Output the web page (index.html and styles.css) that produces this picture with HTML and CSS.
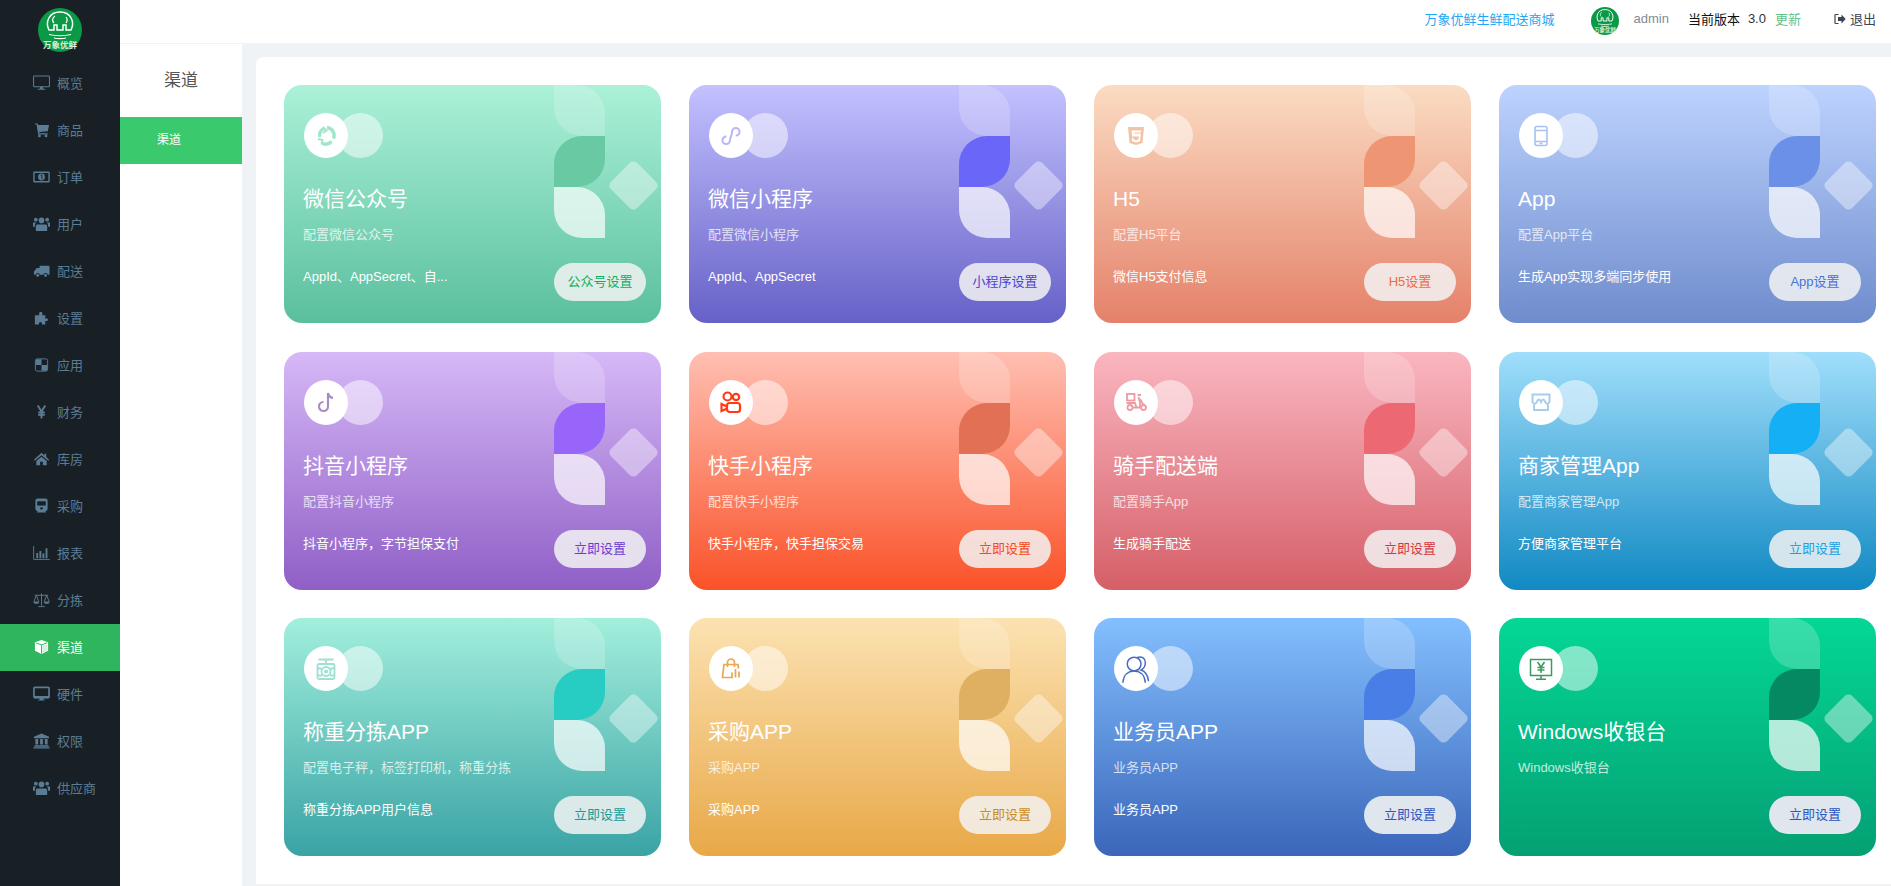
FILE: index.html
```html
<!DOCTYPE html>
<html lang="en">
<head>
    <meta charset="UTF-8">
    <meta name="viewport" content="width=device-width, initial-scale=1.0">
    <title>渠道</title>
    <link rel="stylesheet" href="styles.css">
</head>
<body>
    <svg class="defs" width="0" height="0">
        <symbol id="logo" viewBox="0 0 44 44">
            <circle cx="22" cy="22" r="22" fill="#0a9a45"/>
            <path d="M11 22c-4-8 0-18 11-18s15 10 11 18h-5v-5h-3v5h-6v-5h-3v5z" fill="none" stroke="#fff" stroke-width="1.500"/>
            <path d="M17 8c-3 2-3 5-1 7M28 9c1.500 2 1.500 4 0 6" fill="none" stroke="#fff" stroke-width="1.200"/>
            <path d="M11 26.500c6 1.500 16 1.500 22 0M16 30c4 .8 8 .8 12 0" fill="none" stroke="#fff" stroke-width="1.200"/>
            <text x="22" y="40" text-anchor="middle" class="logo-text">万象优鲜</text>
        </symbol>
        <symbol id="users" viewBox="0 0 18 16">
            <circle cx="9" cy="4.200" r="3"/><circle cx="3" cy="3.400" r="2"/><circle cx="15" cy="3.400" r="2"/>
            <path d="M4.500 8.400h9c1 0 1.500 1 1.500 2v5H3v-5c0-1 .5-2 1.500-2zM0 6.500h3.500c-.8.8-1.500 1.600-1.500 3v1.500H0zM18 6.500h-3.500c.8.8 1.500 1.600 1.500 3v1.500h2z"/>
        </symbol>
    </svg>

    <aside class="sidebar">
        <div class="sidebar-logo"><svg class="logo-big"><use href="#logo"/></svg></div>
        <nav class="menu">
            <a class="menu-item">
                <svg class="menu-icon" viewBox="0 0 18 16"><rect x=".6" y=".6" width="16.800" height="11.300" rx=".8" fill="none" stroke="currentColor" stroke-width="1.100"/><path d="M7.500 12v2.200h-2.500v1h8v-1h-2.500V12z"/></svg>
                <span>概览</span>
            </a>
            <a class="menu-item">
                <svg class="menu-icon" viewBox="0 0 18 16"><path d="M2 1h3l.4 1.800H17l-1.300 6.400-9.200.9.300 1.300H15.500v1.300H5.500L3.800 2.300H2z"/><circle cx="6.800" cy="14.300" r="1.500"/><circle cx="13.800" cy="14.300" r="1.500"/></svg>
                <span>商品</span>
            </a>
            <a class="menu-item">
                <svg class="menu-icon" viewBox="0 0 18 16"><rect x="1" y="3" width="16" height="10" rx=".5" fill="none" stroke="currentColor" stroke-width="1.500"/><circle cx="9" cy="8" r="3.600"/><path d="M8.200 6.400l1.300-.6v4.600" fill="none" stroke="#182025" stroke-width="1"/></svg>
                <span>订单</span>
            </a>
            <a class="menu-item">
                <svg class="menu-icon"><use href="#users"/></svg>
                <span>用户</span>
            </a>
            <a class="menu-item">
                <svg class="menu-icon" viewBox="0 0 18 16"><path d="M7 2.500h9.500a1 1 0 0 1 1 1V12h-1.800a2.400 2.400 0 0 0-4.700 0H7.300a2.400 2.400 0 0 0-4.700 0H1V8.500l3-3.600h3z"/><circle cx="5" cy="12.700" r="1.500"/><circle cx="13.300" cy="12.700" r="1.500"/></svg>
                <span>配送</span>
            </a>
            <a class="menu-item">
                <svg class="menu-icon" viewBox="0 0 18 16"><path d="M2 5h4.500V3a1.700 1.700 0 1 1 3.400 0v2H13v3.500h1.500a1.300 1.300 0 1 1 0 2.700H13V15H9.500v-1.200a1.600 1.600 0 1 0-3.200 0V15H2z"/></svg>
                <span>设置</span>
            </a>
            <a class="menu-item">
                <svg class="menu-icon" viewBox="0 0 18 16"><rect x="2.500" y="1.500" width="13" height="13" rx="2" fill="none" stroke="currentColor" stroke-width="1"/><path d="M3 2h6v6H3zM9 8h6v6H9z"/></svg>
                <span>应用</span>
            </a>
            <a class="menu-item">
                <svg class="menu-icon" viewBox="0 0 18 16"><path d="M5 1l4 6.500L13 1M9 7.500V15M5.500 8.500h7M5.500 11h7" fill="none" stroke="currentColor" stroke-width="2"/></svg>
                <span>财务</span>
            </a>
            <a class="menu-item">
                <svg class="menu-icon" viewBox="0 0 18 16"><path d="M9 1.500l3 2.700V2.500h2v3.500l3 2.800-.9 1L9 4 1.900 9.800l-.9-1zM3.500 10L9 5.500l5.500 4.500v4.500h-4v-3.500h-3v3.500h-4z"/></svg>
                <span>库房</span>
            </a>
            <a class="menu-item">
                <svg class="menu-icon" viewBox="0 0 18 16"><path d="M5 0h8a2.500 2.500 0 0 1 2.500 2.500V11A2.500 2.500 0 0 1 13 13.500l1 1.500H4l1-1.500A2.500 2.500 0 0 1 2.500 11V2.500A2.500 2.500 0 0 1 5 0z"/><rect x="4.500" y="3" width="9" height="4.500" fill="#182025"/><circle cx="9" cy="10.500" r="1.300" fill="#182025"/></svg>
                <span>采购</span>
            </a>
            <a class="menu-item">
                <svg class="menu-icon" viewBox="0 0 18 16"><path d="M.7.500v14.300h17" fill="none" stroke="currentColor" stroke-width="1"/><path d="M3.500 8h2v5.500h-2zM6.800 6h2v7.500h-2zM10 8.500h2v5h-2zM13.300 3h2v10.500h-2z"/></svg>
                <span>报表</span>
            </a>
            <a class="menu-item">
                <svg class="menu-icon" viewBox="0 0 18 16"><path d="M9 1v13M5.500 15h7M2 3h14M3.500 3L1 9.500M3.500 3L6 9.500M14.500 3L12 9.500M14.500 3L17 9.500" fill="none" stroke="currentColor" stroke-width="1"/><path d="M.4 9.500h6.200a3.100 2.600 0 0 1-6.200 0zM11.400 9.500h6.200a3.100 2.600 0 0 1-6.200 0z"/></svg>
                <span>分拣</span>
            </a>
            <a class="menu-item active">
                <svg class="menu-icon" viewBox="0 0 18 16"><path d="M9 .5l7 2.500v9l-7 3.500L2 12V3z"/><path d="M3 3.500l6 2.300 6-2.300M9 5.800v9" fill="none" stroke="#2eb55e" stroke-width="1"/><path d="M9.800 6.700l5.400-2v6.900l-5.400 2.700z" fill="#d6efe0"/></svg>
                <span>渠道</span>
            </a>
            <a class="menu-item">
                <svg class="menu-icon" viewBox="0 0 18 16"><rect x="1" y="1" width="16" height="10.800" rx="1" fill="none" stroke="currentColor" stroke-width="1.800"/><path d="M1 10h16v2.500H1zM7 12.500h4v1.500h1.500v1h-7v-1H7z"/></svg>
                <span>硬件</span>
            </a>
            <a class="menu-item">
                <svg class="menu-icon" viewBox="0 0 18 16"><path d="M9 0l8 3.500V5H1V3.500zM2.500 5.800h3v6h-3zM7.500 5.800h3v6h-3zM12.500 5.800h3v6h-3zM1.500 12.500h15V14h-15zM.5 14.500h17V16H.5z"/></svg>
                <span>权限</span>
            </a>
            <a class="menu-item">
                <svg class="menu-icon"><use href="#users"/></svg>
                <span>供应商</span>
            </a>
        </nav>
    </aside>

    <div class="main">
        <header class="topbar">
            <a class="shop-link">万象优鲜生鲜配送商城</a>
            <svg class="avatar"><use href="#logo"/></svg>
            <span class="user-name">admin</span>
            <span class="version">当前版本</span>
            <span class="version-num">3.0</span>
            <a class="update">更新</a>
            <a class="logout">
                <svg class="logout-icon" viewBox="0 0 12 12"><path d="M4.500 1.500H1.700a.7.700 0 0 0-.7.700v7.600a.7.700 0 0 0 .7.700h2.800" fill="none" stroke="currentColor" stroke-width="1.200"/><path d="M4 4h3.500V1.500L11.700 6 7.500 10.500V8H4z"/></svg>
                <span>退出</span>
            </a>
        </header>

        <div class="body-wrap">
            <div class="subnav">
                <div class="subnav-title">渠道</div>
                <div class="subnav-item">渠道</div>
            </div>
            <div class="panel">
                <div class="card-grid">

                    <div class="card c-wechat">
                        <div class="card-deco"><i class="leaf leaf-a"></i><i class="leaf leaf-b"></i><i class="leaf leaf-a"></i><i class="diamond"></i></div>
                        <div class="card-logo">
                            <span class="logo-circle"><svg viewBox="0 0 24 24" fill="none" stroke="#9fe6cb" stroke-width="3.400"><path d="M6 13a6.500 6.500 0 0 1 4-8.500"/><path d="M13 3.500a8 8 0 0 1 6.500 11"/><path d="M17.500 17.500a8 8 0 0 1-9 2"/><path d="M4 15l4.500 1-1 4.500" stroke-width="2"/><path d="M9 3l3.500 3.500L9 9" stroke-width="2"/></svg></span>
                            <span class="logo-ghost"></span>
                        </div>
                        <h3 class="card-title">微信公众号</h3>
                        <p class="card-sub">配置微信公众号</p>
                        <div class="card-foot">
                            <p class="card-desc">AppId、AppSecret、自...</p>
                            <a class="card-btn">公众号设置</a>
                        </div>
                    </div>

                    <div class="card c-mini">
                        <div class="card-deco"><i class="leaf leaf-a"></i><i class="leaf leaf-b"></i><i class="leaf leaf-a"></i><i class="diamond"></i></div>
                        <div class="card-logo">
                            <span class="logo-circle"><svg viewBox="0 0 24 24" fill="none" stroke="#b9b6f5" stroke-width="2"><path d="M7.500 12.500A3.800 3.800 0 1 0 11 16.300C11 13 13 11.500 13 7.800a3.800 3.800 0 1 1 3.800 3.800"/></svg></span>
                            <span class="logo-ghost"></span>
                        </div>
                        <h3 class="card-title">微信小程序</h3>
                        <p class="card-sub">配置微信小程序</p>
                        <div class="card-foot">
                            <p class="card-desc">AppId、AppSecret</p>
                            <a class="card-btn">小程序设置</a>
                        </div>
                    </div>

                    <div class="card c-h5">
                        <div class="card-deco"><i class="leaf leaf-a"></i><i class="leaf leaf-b"></i><i class="leaf leaf-a"></i><i class="diamond"></i></div>
                        <div class="card-logo">
                            <span class="logo-circle"><svg viewBox="0 0 24 24"><path fill="#f3c3a6" fill-rule="evenodd" d="M4 3h16l-1.500 16L12 21l-6.500-2zM7.500 6.500l.6 6h6.700l-.3 3-2.500.8-2.500-.8-.1-1.500H7.800l.3 3.200L12 18.500l4-1.300.8-7.800H10.300l-.2-1H17l.2-1.900z"/></svg></span>
                            <span class="logo-ghost"></span>
                        </div>
                        <h3 class="card-title">H5</h3>
                        <p class="card-sub">配置H5平台</p>
                        <div class="card-foot">
                            <p class="card-desc">微信H5支付信息</p>
                            <a class="card-btn">H5设置</a>
                        </div>
                    </div>

                    <div class="card c-app">
                        <div class="card-deco"><i class="leaf leaf-a"></i><i class="leaf leaf-b"></i><i class="leaf leaf-a"></i><i class="diamond"></i></div>
                        <div class="card-logo">
                            <span class="logo-circle"><svg viewBox="0 0 24 24" fill="none" stroke="#a8c1ef" stroke-width="1.600"><rect x="6" y="2.500" width="12" height="19" rx="2"/><path d="M6 6.500h12M6 17.500h12M10.500 19.500h3"/></svg></span>
                            <span class="logo-ghost"></span>
                        </div>
                        <h3 class="card-title">App</h3>
                        <p class="card-sub">配置App平台</p>
                        <div class="card-foot">
                            <p class="card-desc">生成App实现多端同步使用</p>
                            <a class="card-btn">App设置</a>
                        </div>
                    </div>

                    <div class="card c-douyin">
                        <div class="card-deco"><i class="leaf leaf-a"></i><i class="leaf leaf-b"></i><i class="leaf leaf-a"></i><i class="diamond"></i></div>
                        <div class="card-logo">
                            <span class="logo-circle"><svg viewBox="0 0 24 24" fill="none" stroke="#a98bc6" stroke-width="2.200"><path d="M14 3v13.500a4.500 4.500 0 1 1-4.500-4.500"/><path d="M14 3c.5 3 2.500 4.500 5 5"/></svg></span>
                            <span class="logo-ghost"></span>
                        </div>
                        <h3 class="card-title">抖音小程序</h3>
                        <p class="card-sub">配置抖音小程序</p>
                        <div class="card-foot">
                            <p class="card-desc">抖音小程序，字节担保支付</p>
                            <a class="card-btn">立即设置</a>
                        </div>
                    </div>

                    <div class="card c-kuaishou">
                        <div class="card-deco"><i class="leaf leaf-a"></i><i class="leaf leaf-b"></i><i class="leaf leaf-a"></i><i class="diamond"></i></div>
                        <div class="card-logo">
                            <span class="logo-circle"><svg viewBox="0 0 24 24" fill="none" stroke="#ff3b17" stroke-width="2.200"><circle cx="8.500" cy="6.500" r="4"/><circle cx="17" cy="7" r="3.200"/><rect x="8" y="13" width="13" height="9" rx="2.500"/><path d="M8 16.500L2.500 14v7L8 18.500"/></svg></span>
                            <span class="logo-ghost"></span>
                        </div>
                        <h3 class="card-title">快手小程序</h3>
                        <p class="card-sub">配置快手小程序</p>
                        <div class="card-foot">
                            <p class="card-desc">快手小程序，快手担保交易</p>
                            <a class="card-btn">立即设置</a>
                        </div>
                    </div>

                    <div class="card c-rider">
                        <div class="card-deco"><i class="leaf leaf-a"></i><i class="leaf leaf-b"></i><i class="leaf leaf-a"></i><i class="diamond"></i></div>
                        <div class="card-logo">
                            <span class="logo-circle"><svg viewBox="0 0 24 24" fill="none" stroke="#f09aa3" stroke-width="1.800"><rect x="3" y="4" width="7.500" height="6.500"/><path d="M2.500 13h8.500l1.500 4.500h3.500c.5-3 0-6-1.500-10.500"/><path d="M13.500 5H17"/><circle cx="6" cy="17.500" r="2.500"/><circle cx="19.500" cy="17.500" r="2.500"/><path d="M8.500 17.500h4M16 9l3.500 6"/></svg></span>
                            <span class="logo-ghost"></span>
                        </div>
                        <h3 class="card-title">骑手配送端</h3>
                        <p class="card-sub">配置骑手App</p>
                        <div class="card-foot">
                            <p class="card-desc">生成骑手配送</p>
                            <a class="card-btn">立即设置</a>
                        </div>
                    </div>

                    <div class="card c-store">
                        <div class="card-deco"><i class="leaf leaf-a"></i><i class="leaf leaf-b"></i><i class="leaf leaf-a"></i><i class="diamond"></i></div>
                        <div class="card-logo">
                            <span class="logo-circle"><svg viewBox="0 0 24 24" fill="none" stroke="#a9cdec" stroke-width="2"><path d="M3.500 4.500h17V12c-1.400 2.500-2.800 2.500-4.200 0-1.400-3.500-2.800-3.500-4.300 0-1.400-3.500-2.800-3.500-4.300 0-1.400 2.500-2.800 2.500-4.200 0z"/><path d="M5 14.500v5.500h14v-5.500"/></svg></span>
                            <span class="logo-ghost"></span>
                        </div>
                        <h3 class="card-title">商家管理App</h3>
                        <p class="card-sub">配置商家管理App</p>
                        <div class="card-foot">
                            <p class="card-desc">方便商家管理平台</p>
                            <a class="card-btn">立即设置</a>
                        </div>
                    </div>

                    <div class="card c-weigh">
                        <div class="card-deco"><i class="leaf leaf-a"></i><i class="leaf leaf-b"></i><i class="leaf leaf-a"></i><i class="diamond"></i></div>
                        <div class="card-logo">
                            <span class="logo-circle"><svg viewBox="0 0 24 24" fill="none" stroke="#9fe0d0" stroke-width="1.800"><path d="M4.500 2.500h15M12 2.500V7"/><rect x="3.500" y="7" width="17" height="15" rx="1.500"/><circle cx="12" cy="14.500" r="4.500"/><circle cx="12" cy="14.500" r="1.200"/><path d="M3.500 11l4.500 1M20.500 11l-4.500 1M3.500 18.500H8M20.500 18.500H16"/></svg></span>
                            <span class="logo-ghost"></span>
                        </div>
                        <h3 class="card-title">称重分拣APP</h3>
                        <p class="card-sub">配置电子秤，标签打印机，称重分拣</p>
                        <div class="card-foot">
                            <p class="card-desc">称重分拣APP用户信息</p>
                            <a class="card-btn">立即设置</a>
                        </div>
                    </div>

                    <div class="card c-buy">
                        <div class="card-deco"><i class="leaf leaf-a"></i><i class="leaf leaf-b"></i><i class="leaf leaf-a"></i><i class="diamond"></i></div>
                        <div class="card-logo">
                            <span class="logo-circle"><svg viewBox="0 0 24 24" fill="none" stroke="#eaa650" stroke-width="1.700"><path d="M14 20.500H3.500L5 7.500h14l.6 4"/><path d="M8.500 10V5.500a3.500 3.500 0 0 1 7 0V10M13 20.500v-5M16.500 20.500V12M20 20.500v-6"/></svg></span>
                            <span class="logo-ghost"></span>
                        </div>
                        <h3 class="card-title">采购APP</h3>
                        <p class="card-sub">采购APP</p>
                        <div class="card-foot">
                            <p class="card-desc">采购APP</p>
                            <a class="card-btn">立即设置</a>
                        </div>
                    </div>

                    <div class="card c-sales">
                        <div class="card-deco"><i class="leaf leaf-a"></i><i class="leaf leaf-b"></i><i class="leaf leaf-a"></i><i class="diamond"></i></div>
                        <div class="card-logo">
                            <span class="logo-circle"><svg class="icon-large" viewBox="0 0 24 24" fill="none" stroke="#4a6bbf" stroke-width="1.200"><circle cx="10.500" cy="8" r="5.500"/><path d="M1.500 23c.5-6 4-9.500 9-9.500s8.500 3.500 9 9.500M13 2.800c4-1.500 6.500 1 6.500 4 0 3-1.500 5-3.500 6 3.500 1 5.500 4.500 6 9"/></svg></span>
                            <span class="logo-ghost"></span>
                        </div>
                        <h3 class="card-title">业务员APP</h3>
                        <p class="card-sub">业务员APP</p>
                        <div class="card-foot">
                            <p class="card-desc">业务员APP</p>
                            <a class="card-btn">立即设置</a>
                        </div>
                    </div>

                    <div class="card c-pos">
                        <div class="card-deco"><i class="leaf leaf-a"></i><i class="leaf leaf-b"></i><i class="leaf leaf-a"></i><i class="diamond"></i></div>
                        <div class="card-logo">
                            <span class="logo-circle"><svg viewBox="0 0 24 24" fill="none" stroke="#3d9a5f" stroke-width="1.500"><rect x="1.500" y="2.500" width="21" height="16"/><path d="M8.500 5l3.500 5 3.500-5M12 10v6M8.500 10.500h7M8.500 13h7M12 18.500V22M7 22.300h10" stroke-width="1.600"/></svg></span>
                            <span class="logo-ghost"></span>
                        </div>
                        <h3 class="card-title">Windows收银台</h3>
                        <p class="card-sub">Windows收银台</p>
                        <div class="card-foot">
                            <p class="card-desc"></p>
                            <a class="card-btn">立即设置</a>
                        </div>
                    </div>

                </div>
            </div>
        </div>
    </div>
</body>
</html>
```

FILE: styles.css
```css
* {
    box-sizing: border-box;
}

html, body {
    height: 100%;
}

body {
    margin: 0;
    display: flex;
    overflow: hidden;
    background: #f0f3f6;
    font-family: "Liberation Sans", "Noto Sans CJK SC", sans-serif;
    font-size: 13px;
}

.defs {
    display: none;
}

.logo-text {
    font-size: 8.500px;
    font-weight: bold;
    fill: #d8f0df;
}

/* left menu */
.sidebar {
    width: 120px;
    flex-shrink: 0;
    background: #182025;
}

.sidebar-logo {
    height: 60px;
    padding-top: 8px;
    display: flex;
    justify-content: center;
}

.logo-big {
    width: 44px;
    height: 44px;
}

.menu-item {
    height: 47px;
    padding: 0 0 2px 33px;
    display: flex;
    align-items: center;
    gap: 7px;
    color: #5a7c94;
    fill: currentColor;
}

.menu-item.active {
    background: #2eb55e;
    color: #fff;
}

.menu-icon {
    width: 17px;
    height: 16px;
    flex-shrink: 0;
}

/* top bar */
.main {
    flex: 1;
    min-width: 0;
    display: flex;
    flex-direction: column;
}

.topbar {
    height: 43px;
    flex-shrink: 0;
    padding: 0 15px 6px 0;
    display: flex;
    align-items: center;
    justify-content: flex-end;
    background: #fff;
}

.shop-link {
    color: #1fa8f5;
    margin-right: 37px;
}

.avatar {
    width: 28px;
    height: 28px;
    margin: 5px 14px 0 0;
}

.user-name {
    color: #7f8c9a;
    margin-right: 19px;
}

.version {
    color: #111;
    margin-right: 8px;
}

.version-num {
    color: #333;
    margin-right: 9px;
}

.update {
    color: #67c08a;
    margin-right: 33px;
}

.logout {
    display: flex;
    align-items: center;
    gap: 4px;
    color: #3d4450;
    fill: currentColor;
}

.logout-icon {
    width: 12px;
    height: 12px;
}

/* second column */
.body-wrap {
    flex: 1;
    min-height: 0;
    display: flex;
}

.subnav {
    width: 122px;
    flex-shrink: 0;
    margin-top: 1px;
    background: #fff;
}

.subnav-title {
    height: 73px;
    line-height: 74px;
    text-align: center;
    font-size: 17px;
    color: #555;
}

.subnav-item {
    height: 47px;
    line-height: 47px;
    padding-left: 37px;
    font-size: 12px;
    color: #fff;
    background: #3ac96d;
}

.panel {
    flex: 1;
    min-width: 0;
    margin: 14px 0 2px 14px;
    padding: 28px 15px 0 28px;
    background: #fff;
    border-radius: 8px 0 0 0;
}

.card-grid {
    display: grid;
    grid-template-columns: repeat(4, 377px);
    grid-auto-rows: 238px;
    column-gap: 28px;
    row-gap: 28.500px;
}

/* cards */
.card {
    --btn-bg: rgba(243, 243, 243, .85);
    position: relative;
    overflow: hidden;
    padding: 28px 15px 0 20px;
    border-radius: 18px;
    color: #fff;
    background: linear-gradient(180deg, var(--top), var(--bottom));
}

.c-wechat { --top: #abf1d8; --bottom: #5abf9e; --leaf: #69c9a3; --btn: #12ad63; }
.c-mini { --top: #c3c1ff; --bottom: #6661c7; --leaf: #6a66f8; --btn: #4b47c9; }
.c-h5 { --top: #fadcc2; --bottom: #e5816a; --leaf: #ee9673; --btn: #ef6a45; }
.c-app { --top: #bdd3ff; --bottom: #6f8ccc; --leaf: #6b90e8; --btn: #4a73d8; }
.c-douyin { --top: #d6b8f7; --bottom: #8f5fc6; --leaf: #9865fb; --btn: #6a3bd0; }
.c-kuaishou { --top: #ffbfb2; --bottom: #fa5228; --leaf: #e27055; --btn: #ef4b1c; }
.c-rider { --top: #fab6c0; --bottom: #d55f68; --leaf: #ec6872; --btn: #d0383f; }
.c-store { --top: #a0defb; --bottom: #1189c3; --leaf: #15aff5; --btn: #1e9fe0; }
.c-weigh { --top: #a2efdc; --bottom: #3aa3a5; --leaf: #27ccc3; --btn: #1a9a98; }
.c-buy { --top: #fce2b2; --bottom: #e8a847; --leaf: #e0b062; --btn: #c98a1f; }
.c-sales { --top: #83bffe; --bottom: #3b66ba; --leaf: #497ee6; --btn: #2b55bf; --btn-bg: #dfe6ee; }
.c-pos { --top: #04d796; --bottom: #04a073; --leaf: #058963; --btn: #2b55bf; --btn-bg: #dfe6ee; }

.card-deco {
    position: absolute;
    top: 0;
    right: 56px;
    width: 51px;
}

.leaf {
    display: block;
    width: 51px;
    height: 51px;
}

.leaf-a {
    border-radius: 0 28px 0 28px;
}

.leaf-a:first-child {
    background: rgba(255, 255, 255, .2);
}

.leaf-a:nth-child(3) {
    background: rgba(255, 255, 255, .7);
}

.leaf-b {
    border-radius: 28px 0 28px 0;
    background: var(--leaf);
}

.diamond {
    position: absolute;
    top: 82px;
    left: 61px;
    width: 37px;
    height: 37px;
    border-radius: 5px;
    transform: rotate(45deg);
    background: rgba(255, 255, 255, .4);
}

.card-logo {
    height: 45px;
    display: flex;
}

.logo-circle {
    position: relative;
    width: 44px;
    height: 45px;
    display: flex;
    align-items: center;
    justify-content: center;
    border-radius: 50%;
    background: #fff;
}

.logo-circle svg {
    width: 24px;
    height: 24px;
}

.logo-circle .icon-large {
    width: 30px;
    height: 30px;
}

.logo-ghost {
    width: 45px;
    height: 45px;
    margin-left: -10px;
    border-radius: 50%;
    background: rgba(255, 255, 255, .5);
}

.card-title {
    margin: 26px 0 0 -1px;
    height: 30px;
    line-height: 30px;
    font-size: 21px;
    font-weight: normal;
}

.card-sub {
    margin: 11px 0 0 -1px;
    height: 20px;
    line-height: 20px;
    font-size: 13px;
    opacity: .75;
}

.card-foot {
    margin-top: 18px;
    display: flex;
    justify-content: space-between;
    align-items: flex-start;
}

.card-desc {
    margin: 0 0 0 -1px;
    line-height: 28px;
    white-space: nowrap;
}

.card-btn {
    position: relative;
    width: 92px;
    height: 38px;
    line-height: 38px;
    text-align: center;
    border-radius: 19px;
    color: var(--btn);
    background: var(--btn-bg);
}
```
